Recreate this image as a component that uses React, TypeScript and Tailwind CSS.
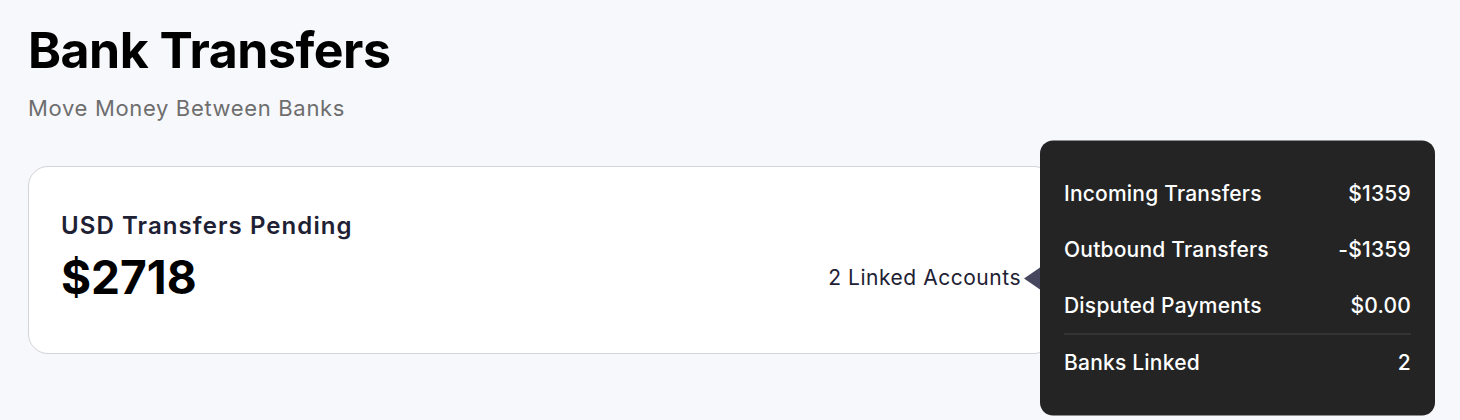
import React from 'react';

const breakdown = [
    { label: 'Incoming Transfers', value: '$1359' },
    { label: 'Outbound Transfers', value: '-$1359' },
    { label: 'Disputed Payments', value: '$0.00' },
];

const LinkedAccounts: React.FC<{ count: number }> = ({ count }) => (
    <span className="relative mb-[12px] self-end text-[21px] leading-[30px] tracking-[0.025em] text-[#1e2133]">
        {count} Linked Accounts
        {/* tooltip */}
        <div className="absolute left-[calc(100%+19px)] top-1/2 -translate-y-1/2 w-[395px] rounded-[13px] bg-[#242424] px-6 py-[25px] text-white tracking-[0.01em]">
            <div className="absolute right-full top-1/2 -translate-y-1/2 h-0 w-0 border-y-[11px] border-r-[16px] border-y-transparent border-r-[#46465f]" />
            {breakdown.map(row => (
                <div key={row.label} className="flex h-[56px] items-center justify-between text-[21px] font-medium">
                    <span>{row.label}</span>
                    <span>{row.value}</span>
                </div>
            ))}
            <div className="h-px bg-[#444444]" />
            <div className="flex h-[56px] items-center justify-between text-[21px] font-medium">
                <span>Banks Linked</span>
                <span>{count}</span>
            </div>
        </div>
    </span>
);

export default function App() {
    return (
        <div className="min-h-[420px] bg-[#f7f8fc] px-7 pt-[25px] font-[Inter,sans-serif]">
            <h1 className="text-[50px] font-bold leading-none text-black tracking-[-0.01em]">Bank Transfers</h1>
            <p className="mt-[19px] text-[22px] leading-7 tracking-[0.03em] text-[#6e6e6e]">Move Money Between Banks</p>

            <div className="mt-[44px] flex w-[1026px] justify-between rounded-[20px] border border-[#d4d4d8] bg-white px-8 pt-[43px] pb-[48px]">
                <div>
                    <h3 className="text-[24px] font-semibold leading-8 tracking-[0.045em] text-[#1e2133]">USD Transfers Pending</h3>
                    <p className="mt-[7px] text-[46px] font-bold leading-[56px] text-black">$2718</p>
                </div>
                <LinkedAccounts count={2} />
            </div>
        </div>
    );
}
